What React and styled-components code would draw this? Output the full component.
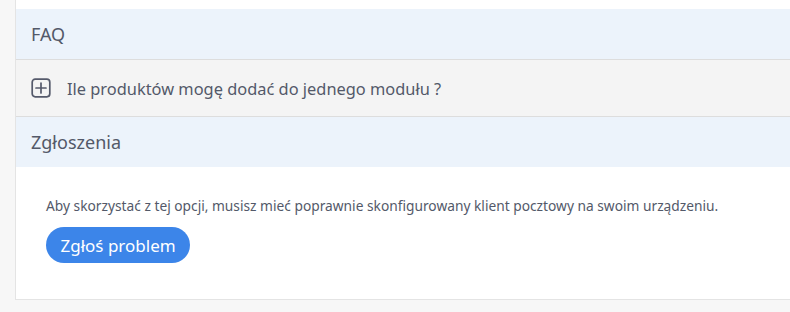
import styled, { createGlobalStyle } from 'styled-components'

const GlobalStyle = createGlobalStyle`
  html, body {
    margin: 0;
    padding: 0;
    background: #f7f7f7;
    overflow: hidden;
  }
  body {
    font-family: "Noto Sans", "Open Sans", sans-serif;
    color: #535969;
  }
`

const Page = styled.div`
  padding: 0 0 12px 15px;
`

const Card = styled.section`
  margin-right: -20px;
  padding-top: 9px;
  background: #fff;
  border-left: 1px solid #e4e4e4;
  border-bottom: 1px solid #e4e4e4;
`

const SectionHeader = styled.h3`
  margin: 0;
  height: 50px;
  display: flex;
  align-items: center;
  padding: 0 15px;
  background: #ecf3fb;
  font-size: 18px;
  font-weight: 400;
  color: #535969;
  border-bottom: ${p => (p.$bordered ? '1px solid #dddddd' : 'none')};
`

const Question = styled.div`
  height: 56px;
  display: flex;
  align-items: center;
  gap: 16px;
  padding: 0 15px;
  background: #f4f4f4;
  border-bottom: 1px solid #dddddd;
  font-size: 16.4px;
  cursor: pointer;
`

const Body = styled.div`
  padding: 29px 30px 36px;
`

const Note = styled.p`
  margin: 0 0 11px;
  font-size: 13.75px;
  line-height: 20px;
`

const Button = styled.button`
  height: 36px;
  padding: 0 14.5px;
  border: none;
  border-radius: 18px;
  background: #3c85e9;
  color: #fff;
  font-family: inherit;
  font-size: 17px;
  cursor: pointer;
`

const PlusSquare = () => (
  <svg width="20" height="20" viewBox="0 0 20 20" fill="none" stroke="#555a6b" strokeWidth="1.7" strokeLinecap="round">
    <rect x="1.2" y="1.2" width="17.6" height="17.6" rx="3" />
    <path d="M10 5v10M5 10h10" />
  </svg>
)

const App = () => {
  return (
    <>
      <GlobalStyle />
      <Page>
        <Card>
          <SectionHeader $bordered>FAQ</SectionHeader>
          <Question>
            <PlusSquare />
            <span>Ile produktów mogę dodać do jednego modułu ?</span>
          </Question>
          <SectionHeader>Zgłoszenia</SectionHeader>
          <Body>
            <Note>Aby skorzystać z tej opcji, musisz mieć poprawnie skonfigurowany klient pocztowy na swoim urządzeniu.</Note>
            <Button>Zgłoś problem</Button>
          </Body>
        </Card>
      </Page>
    </>
  )
}

export default App
